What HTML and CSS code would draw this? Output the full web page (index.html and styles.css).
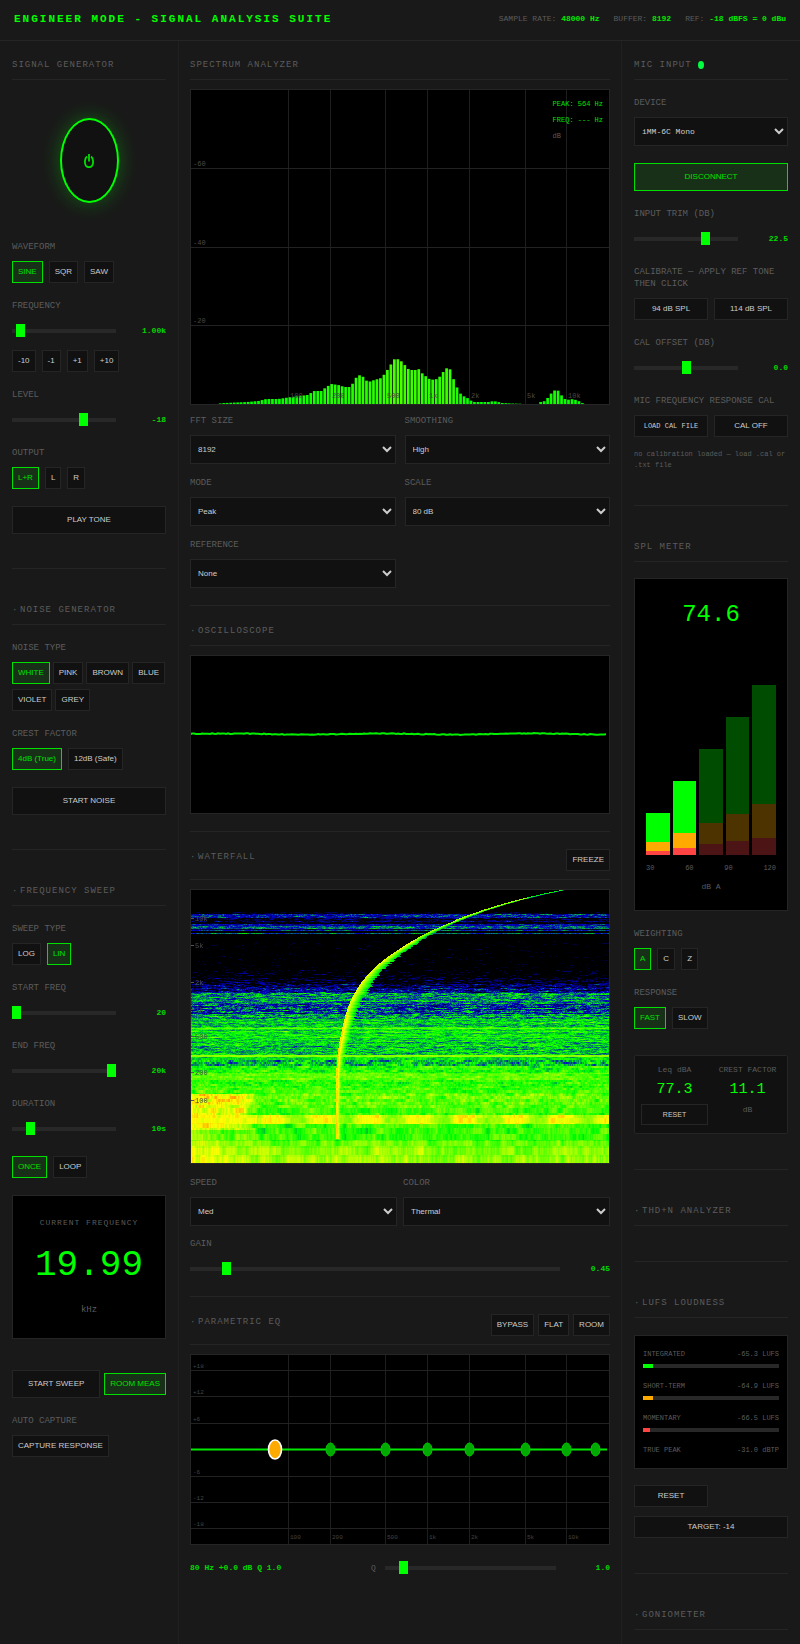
FILE: index.html
```html
<!DOCTYPE html>
<html lang="en">
<head>
<meta charset="utf-8">
<meta name="viewport" content="width=device-width, initial-scale=1">
<title>Engineer Mode - Signal Analysis Suite</title>
<link rel="stylesheet" href="styles.css">
</head>
<body>
<header class="topbar">
  <h1 class="topbar-title">ENGINEER MODE - SIGNAL ANALYSIS SUITE</h1>
  <div class="topbar-info">
    <span>SAMPLE RATE: <b>48000 Hz</b></span>
    <span>BUFFER: <b>8192</b></span>
    <span>REF: <b>-18 dBFS = 0 dBu</b></span>
  </div>
</header>
<main class="layout">
  <aside class="column">
    <section class="section">
      <div class="section-head"><h2>SIGNAL GENERATOR</h2></div>
      <div class="power">
        <button class="power-button" aria-label="Power">
          <svg class="power-icon" viewBox="0 0 10 14" fill="none" stroke="currentColor" stroke-width="1.8"><path d="M5 0v7.500M2.900 2.400C.6 4 .4 9.600 1.900 11.700c1.600 2 4.600 2 6.200 0C9.600 9.600 9.400 4 7.100 2.400"/></svg>
        </button>
      </div>
      <div class="field">
        <div class="label">WAVEFORM</div>
        <div class="button-row"><button class="btn active">SINE</button><button class="btn">SQR</button><button class="btn">SAW</button></div>
      </div>
      <div class="field">
        <label class="label" for="freq">FREQUENCY</label>
        <div class="slider-row"><input id="freq" type="range" value="4"><output>1.00k</output></div>
        <div class="button-row"><button class="btn">-10</button><button class="btn">-1</button><button class="btn">+1</button><button class="btn">+10</button></div>
      </div>
      <div class="field">
        <label class="label" for="level">LEVEL</label>
        <div class="slider-row"><input id="level" type="range" min="-60" max="0" value="-18"><output>-18</output></div>
      </div>
      <div class="field">
        <div class="label">OUTPUT</div>
        <div class="button-row"><button class="btn active">L+R</button><button class="btn">L</button><button class="btn">R</button></div>
      </div>
      <button class="btn btn-large">PLAY TONE</button>
    </section>
    <section class="section">
      <div class="section-head"><h2><span class="marker">·</span>NOISE GENERATOR</h2></div>
      <div class="field">
        <div class="label">NOISE TYPE</div>
        <div class="button-row wrap"><button class="btn active">WHITE</button><button class="btn">PINK</button><button class="btn">BROWN</button><button class="btn">BLUE</button><button class="btn">VIOLET</button><button class="btn">GREY</button></div>
      </div>
      <div class="field">
        <div class="label">CREST FACTOR</div>
        <div class="button-row"><button class="btn active">4dB (True)</button><button class="btn">12dB (Safe)</button></div>
      </div>
      <button class="btn btn-large">START NOISE</button>
    </section>
    <section class="section">
      <div class="section-head"><h2><span class="marker">·</span>FREQUENCY SWEEP</h2></div>
      <div class="field">
        <div class="label">SWEEP TYPE</div>
        <div class="button-row"><button class="btn">LOG</button><button class="btn active">LIN</button></div>
      </div>
      <div class="field">
        <label class="label" for="start">START FREQ</label>
        <div class="slider-row"><input id="start" type="range" value="0"><output>20</output></div>
      </div>
      <div class="field">
        <label class="label" for="end">END FREQ</label>
        <div class="slider-row"><input id="end" type="range" value="100"><output>20k</output></div>
      </div>
      <div class="field">
        <label class="label" for="duration">DURATION</label>
        <div class="slider-row"><input id="duration" type="range" value="15"><output>10s</output></div>
      </div>
      <div class="button-row sweep-mode"><button class="btn active">ONCE</button><button class="btn">LOOP</button></div>
      <div class="readout">
        <div class="readout-title">CURRENT FREQUENCY</div>
        <div class="readout-value">19.99</div>
        <div class="readout-unit">kHz</div>
      </div>
      <div class="sweep-actions"><button class="btn btn-large">START SWEEP</button><button class="btn active">ROOM MEAS</button></div>
      <div class="field">
        <div class="label">AUTO CAPTURE</div>
        <div class="button-row"><button class="btn">CAPTURE RESPONSE</button></div>
      </div>
    </section>
  </aside>

  <div class="column column-main">
    <section class="section">
      <div class="section-head"><h2>SPECTRUM ANALYZER</h2></div>
      <div class="screen">
        <svg id="spectrum" class="plot" viewBox="0 0 418 314" role="img" aria-label="Spectrum"></svg>
        <div class="overlay"><div>PEAK: 564 Hz</div><div>FREQ: --- Hz</div><div class="dim">dB</div></div>
      </div>
      <div class="select-grid">
        <div class="field"><label class="label" for="fft">FFT SIZE</label><select id="fft"><option>8192</option></select></div>
        <div class="field"><label class="label" for="smooth">SMOOTHING</label><select id="smooth"><option>High</option></select></div>
        <div class="field"><label class="label" for="mode">MODE</label><select id="mode"><option>Peak</option></select></div>
        <div class="field"><label class="label" for="scale">SCALE</label><select id="scale"><option>80 dB</option></select></div>
        <div class="field"><label class="label" for="reference">REFERENCE</label><select id="reference"><option>None</option></select></div>
      </div>
    </section>
    <section class="section">
      <div class="section-head"><h2><span class="marker">·</span>OSCILLOSCOPE</h2></div>
      <div class="screen"><svg id="scope" class="plot" viewBox="0 0 418 157" role="img" aria-label="Oscilloscope"></svg></div>
    </section>
    <section class="section">
      <div class="section-head"><h2><span class="marker">·</span>WATERFALL</h2><div class="button-row tight"><button class="btn">FREEZE</button></div></div>
      <div class="screen">
        <canvas id="waterfall" class="plot" width="418" height="273"></canvas>
        <svg id="waterfall-axis" class="plot axis" viewBox="0 0 418 273" aria-hidden="true"></svg>
      </div>
      <div class="select-grid tight">
        <div class="field"><label class="label" for="speed">SPEED</label><select id="speed"><option>Med</option></select></div>
        <div class="field"><label class="label" for="color">COLOR</label><select id="color"><option>Thermal</option></select></div>
      </div>
      <div class="field">
        <label class="label" for="gain">GAIN</label>
        <div class="slider-row"><input id="gain" type="range" value="9"><output>0.45</output></div>
      </div>
    </section>
    <section class="section">
      <div class="section-head"><h2><span class="marker">·</span>PARAMETRIC EQ</h2><div class="button-row tight"><button class="btn">BYPASS</button><button class="btn">FLAT</button><button class="btn">ROOM</button></div></div>
      <div class="screen"><svg id="eq" class="plot small-text" viewBox="0 0 418 189" role="img" aria-label="Parametric EQ curve"></svg></div>
      <div class="eq-footer">
        <output class="eq-state">80 Hz +0.0 dB Q 1.0</output>
        <div class="q-control"><label for="q">Q</label><input id="q" type="range" value="9"><output>1.0</output></div>
      </div>
    </section>
  </div>

  <aside class="column column-right">
    <section class="section">
      <div class="section-head"><h2>MIC INPUT <span class="status"></span></h2></div>
      <div class="field"><label class="label" for="device">DEVICE</label><select id="device" class="mono"><option>iMM-6C Mono</option></select></div>
      <button class="btn btn-large active">DISCONNECT</button>
      <div class="field">
        <label class="label" for="trim">INPUT TRIM (DB)</label>
        <div class="slider-row"><input id="trim" type="range" value="71"><output>22.5</output></div>
      </div>
      <div class="field">
        <div class="label">CALIBRATE — APPLY REF TONE THEN CLICK</div>
        <div class="button-row even"><button class="btn">94 dB SPL</button><button class="btn">114 dB SPL</button></div>
      </div>
      <div class="field">
        <label class="label" for="offset">CAL OFFSET (DB)</label>
        <div class="slider-row"><input id="offset" type="range" value="50"><output>0.0</output></div>
      </div>
      <div class="field">
        <div class="label">MIC FREQUENCY RESPONSE CAL</div>
        <div class="button-row even"><button class="btn mono">LOAD CAL FILE</button><button class="btn">CAL OFF</button></div>
        <p class="note">no calibration loaded — load .cal or .txt file</p>
      </div>
    </section>
    <section class="section">
      <div class="section-head"><h2>SPL METER</h2></div>
      <div class="meter">
        <div class="meter-value">74.6</div>
        <div class="meter-bars">
          <div class="meter-bar" style="height:21%"></div>
          <div class="meter-bar" style="height:37%"></div>
          <div class="meter-bar off" style="height:53%"></div>
          <div class="meter-bar off" style="height:69%"></div>
          <div class="meter-bar off" style="height:85%"></div>
        </div>
        <div class="meter-scale"><span>30</span><span>60</span><span>90</span><span>120</span></div>
        <div class="meter-unit">dB A</div>
      </div>
      <div class="field">
        <div class="label">WEIGHTING</div>
        <div class="button-row"><button class="btn active">A</button><button class="btn">C</button><button class="btn">Z</button></div>
      </div>
      <div class="field">
        <div class="label">RESPONSE</div>
        <div class="button-row"><button class="btn active">FAST</button><button class="btn">SLOW</button></div>
      </div>
      <div class="stats">
        <div class="stat"><div>Leq dBA</div><div class="stat-value">77.3</div><button class="btn btn-small">RESET</button></div>
        <div class="stat"><div>CREST FACTOR</div><div class="stat-value">11.1</div><div>dB</div></div>
      </div>
    </section>
    <section class="section">
      <div class="section-head"><h2><span class="marker">·</span>THD+N ANALYZER</h2></div>
    </section>
    <section class="section">
      <div class="section-head"><h2><span class="marker">·</span>LUFS LOUDNESS</h2></div>
      <div class="lufs">
        <div class="lufs-row"><span>INTEGRATED</span><span>-65.3 LUFS</span></div>
        <div class="lufs-track"><div class="lufs-fill" style="width:7%"></div></div>
        <div class="lufs-row"><span>SHORT-TERM</span><span>-64.9 LUFS</span></div>
        <div class="lufs-track"><div class="lufs-fill orange" style="width:7.5%"></div></div>
        <div class="lufs-row"><span>MOMENTARY</span><span>-66.5 LUFS</span></div>
        <div class="lufs-track"><div class="lufs-fill red" style="width:5%"></div></div>
        <div class="lufs-row"><span>TRUE PEAK</span><span>-31.0 dBTP</span></div>
      </div>
      <div class="lufs-actions"><button class="btn">RESET</button><button class="btn wide">TARGET: -14</button></div>
    </section>
    <section class="section">
      <div class="section-head"><h2><span class="marker">·</span>GONIOMETER</h2></div>
    </section>
  </aside>
</main>
<script src="script.js"></script>
</body>
</html>
```
FILE: styles.css
```css
:root {
  --bg: #191919;
  --panel: #111;
  --line: #252525;
  --muted: #5c5c5c;
  --text: #ccc;
  --green: #0f0;
  --mono: "Liberation Mono", monospace;
  --sans: "Liberation Sans", Arial, sans-serif;
}

* { box-sizing: border-box; }

body {
  margin: 0;
  min-height: 100vh;
  display: flex;
  flex-direction: column;
  background: var(--bg);
  color: var(--muted);
  font: 8px/12px var(--mono);
}

h1, h2, p { margin: 0; }

.topbar {
  display: flex;
  justify-content: space-between;
  align-items: center;
  padding: 9px 14px 11px;
  border-bottom: 1px solid var(--line);
}
.topbar-title {
  color: var(--green);
  font: bold 11px/20px var(--mono);
  letter-spacing: 2px;
}
.topbar-info { display: flex; gap: 14px; }
.topbar-info b { color: #00e800; font-weight: bold; }

.layout {
  flex: 1;
  display: grid;
  grid-template-columns: 178px minmax(0, 1fr) 178px;
}
.column { padding: 16px 12px 0; }
.column-main {
  padding: 16px 11px 0;
  border: solid #202020;
  border-width: 0 1px;
}

.section {
  display: flex;
  flex-direction: column;
  gap: 16px;
  padding-bottom: 34px;
}
.section + .section {
  border-top: 1px solid var(--line);
  padding-top: 33px;
}
.column-right .section + .section { padding-bottom: 35px; }
.column .section:last-child { padding-bottom: 12px; }
.column-main .section { gap: 9px; padding-bottom: 17px; }
.column-main .section + .section { padding-top: 17px; }

.section-head {
  display: flex;
  justify-content: space-between;
  align-items: flex-start;
  padding-bottom: 8px;
  border-bottom: 1px solid var(--line);
}
h2 {
  font: 9px/16px var(--mono);
  height: 14px;
  letter-spacing: 1px;
}
.marker { display: inline-block; width: 8px; }
.status {
  display: inline-block;
  width: 6px;
  height: 8px;
  border-radius: 50%;
  background: #00ff41;
  vertical-align: middle;
}

.power { display: flex; justify-content: center; padding: 22px 0 21px; }
.power-button {
  display: grid;
  place-items: center;
  width: 59px;
  height: 85px;
  border: 2px solid var(--green);
  border-radius: 50%;
  background: var(--panel);
  color: #00e000;
  box-shadow: 0 0 20px rgba(0, 255, 0, .3);
}
.power-icon { width: 10px; height: 14px; }

.field { display: flex; flex-direction: column; gap: 8px; min-width: 0; }
.label { padding-top: 1px; font-size: 9px; line-height: 12px; }

.button-row { display: flex; gap: 6px; }
.button-row.wrap { flex-wrap: wrap; gap: 5px 3px; }
.button-row.tight { gap: 4px; }
.button-row.even .btn { flex: 1; }
.slider-row + .button-row { padding-top: 1px; }

.btn {
  height: 22px;
  padding: 0 5px;
  border: 1px solid var(--line);
  border-radius: 0;
  background: var(--panel);
  color: var(--text);
  font: 8px/12px var(--sans);
  white-space: nowrap;
}
.btn.active {
  border-color: #00e000;
  background: #173017;
  color: #00e000;
}
.btn.mono { font: 7px/12px var(--mono); }
.btn-large { height: 28px; margin-top: 1px; }
.btn-small { height: 21px; font-size: 7px; }

.slider-row { display: flex; align-items: center; gap: 12px; height: 21px; }
.slider-row output { width: 38px; }
output { color: #00d800; font-weight: bold; text-align: right; }

input[type="range"] {
  appearance: none;
  flex: 1;
  min-width: 0;
  height: 4px;
  margin: 0;
  background: #282828;
}
input[type="range"]::-webkit-slider-thumb {
  appearance: none;
  width: 9px;
  height: 13px;
  background: var(--green);
}

select {
  width: 100%;
  height: 29px;
  padding: 0 3px;
  border: 1px solid var(--line);
  border-radius: 0;
  background: var(--panel);
  color: var(--text);
  font: 8px/14px var(--sans);
}
select.mono { font: 8px/12px var(--mono); }

.sweep-mode { padding-top: 1px; }
.readout {
  margin-top: 1px;
  padding: 21px 12px 18px;
  border: 1px solid var(--line);
  background: #000;
  text-align: center;
}
.readout-title { letter-spacing: 1px; }
.readout-value { padding: 17px 0 14px; color: var(--green); font-size: 36px; line-height: 40px; }
.readout-unit { font-size: 9px; line-height: 20px; }
.sweep-actions { display: flex; align-items: center; gap: 4px; padding-top: 14px; }
.sweep-actions .btn-large { flex: 1; }

.screen {
  position: relative;
  border: 1px solid var(--line);
  background: #000;
}
.plot { display: block; width: 100%; }
.axis { position: absolute; inset: 0; }
.plot text { font: 7px var(--mono); fill: #4a4a4a; }
.plot.small-text text { font-size: 6px; fill: #444; }
.overlay {
  position: absolute;
  top: 6px;
  right: 6px;
  color: #00e000;
  font-size: 7px;
  line-height: 16px;
}
.overlay .dim { color: var(--muted); }

.select-grid { display: grid; grid-template-columns: 1fr 1fr; gap: 12px 9px; }
.select-grid.tight { gap: 12px 6px; padding: 3px 0 2px; }

.eq-footer { display: grid; grid-template-columns: 172px 1fr; gap: 9px; align-items: center; padding-top: 3px; }
.eq-state { text-align: left; }
.q-control { display: flex; align-items: center; gap: 9px; height: 21px; }
.q-control output { width: 45px; }

.note { padding-top: 4px; font-size: 7px; line-height: 11px; }

.meter { padding: 22px 11px 17px; border: 1px solid var(--line); background: #000; text-align: center; }
.meter-value { color: var(--green); font-size: 24px; line-height: 28px; }
.meter-bars { display: flex; align-items: flex-end; gap: 3px; height: 200px; margin-top: 26px; }
.meter-bar {
  flex: 1;
  background: linear-gradient(to top, #f44 10%, #fa0 10%, #fa0 30%, #0f0 30%);
}
.meter-bar.off { opacity: .3; }
.meter-scale { display: flex; justify-content: space-between; padding: 7px 0; font-size: 7px; }

.stats {
  display: grid;
  grid-template-columns: 1fr 1fr;
  gap: 6px;
  margin-top: 10px;
  padding: 8px 6px;
  border: 1px solid var(--line);
  border-radius: 2px;
  background: var(--panel);
  text-align: center;
}
.stat { display: flex; flex-direction: column; gap: 4px; }
.stat-value { color: var(--green); font-size: 15px; line-height: 20px; }

.lufs { margin-top: 1px; padding: 12px 8px; border: 1px solid var(--line); background: #000; }
.lufs-row { display: flex; justify-content: space-between; font-size: 7px; }
.lufs-track { height: 4px; margin: 4px 0 12px; background: #282828; }
.lufs-fill { height: 100%; background: var(--green); }
.lufs-fill.orange { background: #fa0; }
.lufs-fill.red { background: #f44; }
.lufs-actions { display: grid; grid-template-columns: 1fr 1fr; gap: 9px 6px; }
.lufs-actions .wide { grid-column: span 2; }
```
FILE: script.js
```js
const NS = "http://www.w3.org/2000/svg";

function add(svg, tag, attrs, text) {
  const node = document.createElementNS(NS, tag);
  for (const key in attrs) node.setAttribute(key, attrs[key]);
  if (text) node.textContent = text;
  svg.appendChild(node);
}

function interpolate(points, x) {
  if (x <= points[0][0]) return points[0][1];
  for (let i = 1; i < points.length; i++) {
    const [x0, y0] = points[i - 1];
    const [x1, y1] = points[i];
    if (x <= x1) return y0 + (y1 - y0) * (x - x0) / (x1 - x0);
  }
  return points[points.length - 1][1];
}

/* Cubic Hermite interpolation through the points. */
function smooth(points, x) {
  const n = points.length;
  if (x <= points[0][0]) return points[0][1];
  if (x >= points[n - 1][0]) return points[n - 1][1];
  let i = 1;
  while (points[i][0] < x) i++;
  const slope = k => {
    const a = points[Math.max(0, k - 1)], b = points[Math.min(n - 1, k + 1)];
    return (b[1] - a[1]) / (b[0] - a[0]);
  };
  const [x0, y0] = points[i - 1], [x1, y1] = points[i];
  const h = x1 - x0, t = (x - x0) / h, t2 = t * t, t3 = t2 * t;
  return (2 * t3 - 3 * t2 + 1) * y0 + (t3 - 2 * t2 + t) * h * slope(i - 1)
    + (3 * t2 - 2 * t3) * y1 + (t3 - t2) * h * slope(i);
}

let seed = 12345;
function random() {
  seed = (seed * 1664525 + 1013904223) >>> 0;
  return seed / 4294967296;
}

const freqs = [[97, "100"], [139, "200"], [194, "500"], [236, "1k"], [278, "2k"], [334, "5k"], [375, "10k"]];

function grid(svg, height, rows) {
  for (const [x] of freqs) add(svg, "path", { d: `M${x}.5 0V${height}`, stroke: "#1e1e1e" });
  for (const [y, label] of rows) {
    add(svg, "path", { d: `M0 ${y}.5H418`, stroke: "#222" });
    add(svg, "text", { x: 2, y: y - 2 }, label);
  }
}

function freqLabels(svg, y) {
  for (const [x, label] of freqs) add(svg, "text", { x: x + 2, y }, label);
}

function drawSpectrum() {
  const svg = document.getElementById("spectrum");
  const shape = [[0,0],[22,0],[32,1],[55,2],[66,3],[74,5],[86,5],[99,7],[115,9],[122,13],[129,13],[134,17],[139,20],[146,19],[152,17],[159,17],[162,25],[169,30],[172,25],[176,22],[182,24],[189,26],[193,31],[197,37],[200,42],[203,46],[207,44],[210,42],[214,37],[217,34],[224,34],[227,35],[231,29],[235,27],[238,24],[245,25],[249,29],[252,34],[256,37],[259,33],[262,22],[265,16],[269,9],[273,7],[277,5],[280,2],[297,2],[301,3],[306,2],[310,1],[320,.5],[340,0],[347,0],[348,2],[353,3],[356,7],[360,12],[363,14],[367,13],[370,7],[374,4],[381,5],[386,3],[389,2],[391,0]];
  grid(svg, 314, [[78, "-60"], [157, "-40"], [235, "-20"]]);
  for (let i = 0; i < 120; i++) {
    const x = i * 3.483;
    const h = interpolate(shape, x);
    if (h < 0.3) continue;
    add(svg, "rect", { x, y: 314 - h, width: 2.7, height: h, fill: `rgb(${Math.round(h * 1.7)},255,0)` });
  }
  freqLabels(svg, 308);
}

function drawScope() {
  const svg = document.getElementById("scope");
  let d = "M0 78";
  for (let x = 1; x <= 416; x += 2) d += `L${x} ${(78 - Math.sin(x / 24) * .5 + random() * .8 - .4).toFixed(1)}`;
  add(svg, "path", { d, fill: "none", stroke: "#00f000", "stroke-width": 2 });
}

function drawEq() {
  const svg = document.getElementById("eq");
  grid(svg, 189, [[15, "+18"], [41, "+12"], [68, "+6"], [121, "-6"], [147, "-12"], [173, "-18"]]);
  freqLabels(svg, 184);
  add(svg, "path", { d: "M0 94.500H416", stroke: "#00e800", "stroke-width": 2 });
  for (const x of [139, 194, 236, 278, 334, 375, 404])
    add(svg, "ellipse", { cx: x + .5, cy: 94.5, rx: 4.5, ry: 6.5, fill: "#0a0", stroke: "#00c800" });
  add(svg, "ellipse", { cx: 84, cy: 94.5, rx: 6.5, ry: 9.5, fill: "#fa0", stroke: "#fff", "stroke-width": 1.6 });
}

function thermal(v) {
  v = Math.max(0, Math.min(1, v));
  if (v < .25) return [0, 0, v * 4 * 200];
  if (v < .5) return [0, (v - .25) * 4 * 255, (.5 - v) * 4 * 200];
  if (v < .75) return [(v - .5) * 4 * 255, 255, 0];
  return [255, 255 - (v - .75) * 4 * 255, 0];
}

function drawWaterfall() {
  const canvas = document.getElementById("waterfall");
  const ctx = canvas.getContext("2d");
  const W = canvas.width, H = canvas.height;
  const image = ctx.createImageData(W, H);
  /* First row of each band, its mean level and its noise amount. */
  const bands = [[0,0,0],[22,.0,.1],[24,.26,.14],[28,.06,.14],[31,.12,.16],[32,.0,.1],[34,.24,.12],[36,.34,.12],[39,.08,.1],[40,.3,.1],[41,-.05,.05],[43,.34,.1],[44,-.12,.08],[51,-.1,.14],[80,-.04,.14],[88,.02,.16],[94,.12,.18],[98,.2,.18],[103,.38,.13],[114,.29,.17],[124,.4,.14],[129,.46,.1],[138,.55,.05],[139,.48,.09],[152,.45,.11],[165,.64,.03],[167,.48,.08],[170,.44,.13],[176,.53,.08],[183,.59,.06],[190,.54,.08],[197,.56,.07],[204,.6,.08],[214,.58,.07],[218,.55,.07],[225,.7,.04],[234,.55,.07],[243,.55,.07],[251,.6,.06],[258,.63,.06],[267,.65,.06]];
  const curve = [[0,370],[5,347],[12,319],[21,290],[31,263],[44,234],[60,207],[76,186],[94,170],[117,158],[144,151],[170,147],[200,146],[260,146]];
  const trail = [[0,2],[30,4],[50,7],[64,9],[78,10],[100,11],[123,9],[150,8],[180,5],[260,4]];
  let band = 0, row = [], blockEnd = 0;
  for (let y = 0; y < H; y++) {
    while (band < bands.length - 1 && bands[band + 1][0] <= y) band++;
    const [, mean, amount] = bands[band];
    if (y >= blockEnd) {
      row = [];
      let n = 0;
      for (let x = 0; x < W; x++) {
        n = n * .72 + (random() - .5) * 1.3;
        row.push(n);
      }
      blockEnd = y + (y < 168 ? 1 : y < 200 ? 2 : y < 218 ? 3 : y < 235 ? 5 : y < 251 ? 6 : 9);
    }
    const drift = y > 98 && y < 160 ? (random() - .5) * .08 : 0;
    const cx = smooth(curve, y);
    const len = interpolate(trail, y) * (.8 + random() * .4);
    const spread = y < 30 ? 3 : 1.5;
    for (let x = 0; x < W; x++) {
      let v = mean + drift + row[x] * amount;
      if (y > 203) {
        const left = y < 240 ? Math.max(0, Math.min(1, (68 - x) / 20)) : Math.max(0, (75 - x) / 75) * .6;
        v += left * .17;
      }
      if (y >= 225 && y < 234) {
        const beat = Math.sin((x - 68) / 48 * Math.PI * 2 - .3);
        v = (x < 66 ? .75 : .67 + .08 * Math.min(1, beat + .5)) + row[x] * .04;
      }
      const dx = x - cx;
      if (y < 249 && dx > -spread && dx < len) {
        const k = dx < 0 ? 1 : 1 - dx / len;
        const peak = y < 8 ? .5 : y < 50 ? .66 : y < 125 ? .72 : .78;
        v = Math.max(v, peak * (.58 + .42 * k) + row[x] * .02);
      }
      const [r, g, b] = thermal(v);
      image.data.set([r, g, b, 255], (y * W + x) * 4);
    }
  }
  ctx.putImageData(image, 0, 0);

  const axis = document.getElementById("waterfall-axis");
  for (const [y, label] of [[28, "10k"], [55, "5k"], [92, "2k"], [119, "1k"], [146, "500"], [182, "200"], [210, "100"]]) {
    add(axis, "path", { d: `M0 ${y}.5H3`, stroke: "#555" });
    add(axis, "text", { x: 4, y: y + 3 }, label);
  }
}

drawSpectrum();
drawScope();
drawWaterfall();
drawEq();
```
